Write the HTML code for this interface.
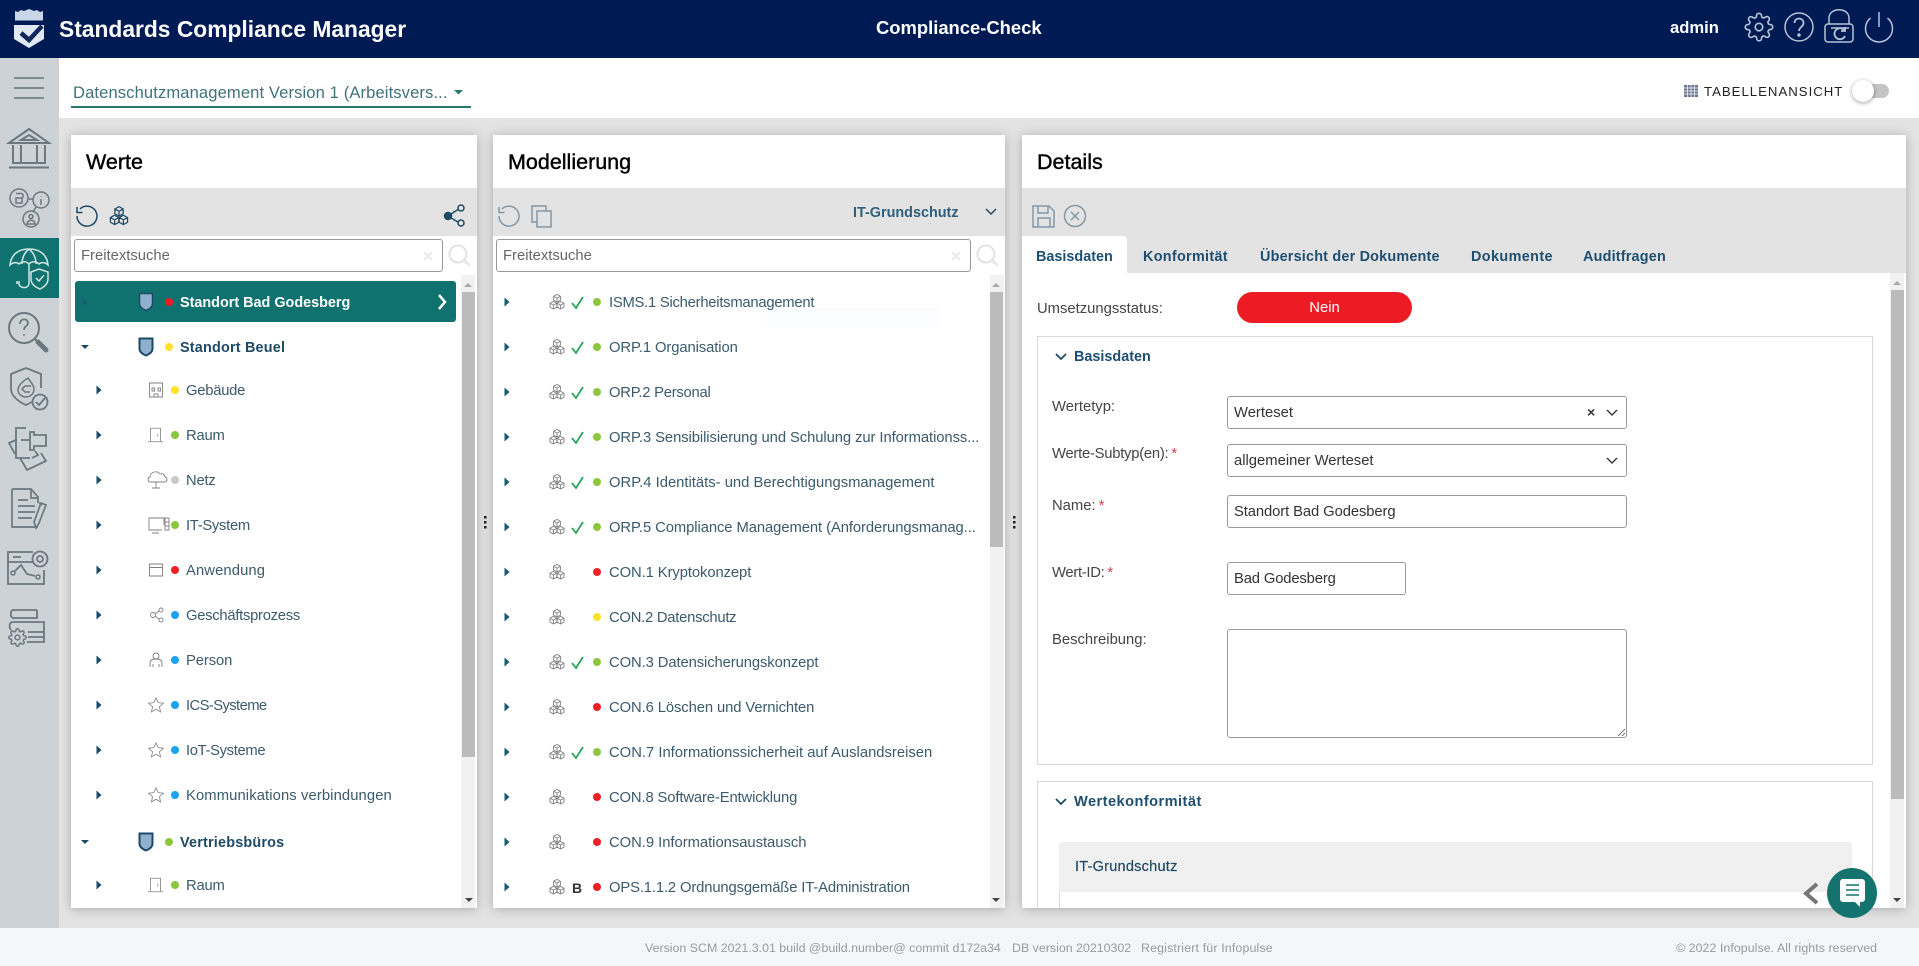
<!DOCTYPE html>
<html lang="de"><head><meta charset="utf-8"><title>Standards Compliance Manager</title>
<style>
html,body{margin:0;padding:0;width:1919px;height:966px;overflow:hidden;background:#e3e3e3;font-family:"Liberation Sans",sans-serif}
.b{position:absolute}
.t{position:absolute;line-height:20px;white-space:nowrap}
.tr{font-size:14.8px;letter-spacing:.1px;color:#3b5a6c;margin-top:1px}
.bd{font-size:14.4px;font-weight:bold;color:#1f4a66;margin-top:1px}
.tab{font-size:14.4px;font-weight:bold;color:#1f4f70;margin-top:2px}
.ttl{font-size:21.5px;color:#000;-webkit-text-stroke:.4px #000;margin-top:1px}
.lb{font-size:14.8px;color:#444;margin-top:1px}
.lb i{color:#d9414a;font-style:normal;margin-left:3px}
.in{position:absolute;box-sizing:border-box;background:#fff;border:1px solid #999;border-radius:3px;font-size:14.8px;color:#333;padding-left:6px;line-height:32px;white-space:nowrap}
.ph{color:#666;line-height:33px}
.panel{position:absolute;background:#fff;box-shadow:0 1px 10px rgba(0,0,0,.25)}
.ft{font-size:12.4px;color:#9a9a9a}
#ic{position:absolute;left:0;top:0;z-index:5}
</style></head><body>
<div class="b" style="left:0;top:0;width:1919px;height:58px;background:#001a54"></div>
<div class="b" style="left:0;top:58px;width:59px;height:870px;background:#cdd2d6"></div>
<div class="b" style="left:0;top:238px;width:59px;height:60px;background:#0f726f"></div>
<div class="b" style="left:59px;top:58px;width:1860px;height:60px;background:#fff"></div>
<div class="b" style="left:0;top:928px;width:1919px;height:38px;background:#f5f6f8"></div>

<div class="t" style="left:59px;top:18px;font-size:22.8px;line-height:22px;font-weight:bold;color:#fff">Standards Compliance Manager</div>
<div class="t" style="left:876px;top:18px;font-size:18.4px;font-weight:bold;color:#fff">Compliance-Check</div>
<div class="t" style="left:1670px;top:18px;font-size:16.6px;font-weight:bold;color:#fff">admin</div>

<div class="t" style="left:73px;top:83px;font-size:16.6px;letter-spacing:.1px;color:#41717c">Datenschutzmanagement Version 1 (Arbeitsvers...</div>
<div class="b" style="left:71px;top:106px;width:400px;height:2px;background:#27786f"></div>
<div class="t" style="left:1704px;top:82px;font-size:13.2px;letter-spacing:1px;color:#222">TABELLENANSICHT</div>
<div class="b" style="left:1855px;top:84px;width:34px;height:14px;border-radius:7px;background:#c4c4c4"></div>
<div class="b" style="left:1852px;top:80px;width:22px;height:22px;border-radius:50%;background:#fff;box-shadow:0 1px 4px rgba(0,0,0,.4)"></div>

<!-- Panel 1 -->
<div class="panel" style="left:71px;top:135px;width:406px;height:773px"></div>
<div class="b" style="left:71px;top:188px;width:406px;height:48px;background:#e3e3e3"></div>
<div class="t ttl" style="left:86px;top:151px">Werte</div>
<div class="in ph" style="left:74px;top:239px;width:369px;height:33px">Freitextsuche</div>
<div class="b" style="left:461px;top:275px;width:14px;height:633px;background:#f1f1f1"></div>
<div class="b" style="left:462px;top:292px;width:13px;height:465px;background:#bbb"></div>
<div class="b" style="left:75px;top:281px;width:381px;height:41px;border-radius:3px;background:#0f726f"></div>
<div class="t" style="left:180px;top:293px;font-size:14.4px;font-weight:bold;color:#fff">Standort Bad Godesberg</div>
<div class="t bd" style="left:180px;top:337px;letter-spacing:.2px">Standort Beuel</div>
<div class="t tr" style="left:186px;top:380px;letter-spacing:-.25px">Gebäude</div>
<div class="t tr" style="left:186px;top:425px;letter-spacing:-.2px">Raum</div>
<div class="t tr" style="left:186px;top:470px;letter-spacing:-.2px">Netz</div>
<div class="t tr" style="left:186px;top:515px;letter-spacing:-.3px">IT-System</div>
<div class="t tr" style="left:186px;top:560px">Anwendung</div>
<div class="t tr" style="left:186px;top:605px;letter-spacing:-.28px">Geschäftsprozess</div>
<div class="t tr" style="left:186px;top:650px;letter-spacing:-.1px">Person</div>
<div class="t tr" style="left:186px;top:695px;letter-spacing:-.6px">ICS-Systeme</div>
<div class="t tr" style="left:186px;top:740px;letter-spacing:-.35px">IoT-Systeme</div>
<div class="t tr" style="left:186px;top:785px">Kommunikations verbindungen</div>
<div class="t bd" style="left:180px;top:832px;letter-spacing:.2px">Vertriebsbüros</div>
<div class="t tr" style="left:186px;top:875px;letter-spacing:-.2px">Raum</div>

<!-- Panel 2 -->
<div class="panel" style="left:493px;top:135px;width:512px;height:773px"></div>
<div class="b" style="left:493px;top:188px;width:512px;height:48px;background:#e3e3e3"></div>
<div class="t ttl" style="left:508px;top:151px">Modellierung</div>
<div class="t" style="left:853px;top:203px;font-size:14.4px;font-weight:bold;color:#2f5f7c">IT-Grundschutz</div>
<div class="in ph" style="left:496px;top:239px;width:475px;height:33px">Freitextsuche</div>
<div class="b" style="left:767px;top:308px;width:171px;height:20px;background:#fafcff"></div>
<div class="b" style="left:990px;top:275px;width:14px;height:633px;background:#f1f1f1"></div>
<div class="b" style="left:990px;top:292px;width:13px;height:255px;background:#bbb"></div>
<div class="t tr" style="left:609px;top:292px;letter-spacing:-.25px">ISMS.1 Sicherheitsmanagement</div>
<div class="t tr" style="left:609px;top:337px;letter-spacing:-.1px">ORP.1 Organisation</div>
<div class="t tr" style="left:609px;top:382px;letter-spacing:-.25px">ORP.2 Personal</div>
<div class="t tr" style="left:609px;top:427px;letter-spacing:-.08px">ORP.3 Sensibilisierung und Schulung zur Informationss...</div>
<div class="t tr" style="left:609px;top:472px;letter-spacing:0">ORP.4 Identitäts- und Berechtigungsmanagement</div>
<div class="t tr" style="left:609px;top:517px;letter-spacing:-.08px">ORP.5 Compliance Management (Anforderungsmanag...</div>
<div class="t tr" style="left:609px;top:562px;letter-spacing:-.09px">CON.1 Kryptokonzept</div>
<div class="t tr" style="left:609px;top:607px;letter-spacing:-.25px">CON.2 Datenschutz</div>
<div class="t tr" style="left:609px;top:652px;letter-spacing:-.1px">CON.3 Datensicherungskonzept</div>
<div class="t tr" style="left:609px;top:697px;letter-spacing:-.1px">CON.6 Löschen und Vernichten</div>
<div class="t tr" style="left:609px;top:742px;letter-spacing:0">CON.7 Informationssicherheit auf Auslandsreisen</div>
<div class="t tr" style="left:609px;top:787px;letter-spacing:-.13px">CON.8 Software-Entwicklung</div>
<div class="t tr" style="left:609px;top:832px;letter-spacing:-.03px">CON.9 Informationsaustausch</div>
<div class="t tr" style="left:609px;top:877px;letter-spacing:-.14px">OPS.1.1.2 Ordnungsgemäße IT-Administration</div>
<div class="t" style="left:572px;top:878px;font-size:14px;font-weight:bold;color:#333">B</div>

<!-- Panel 3 -->
<div class="panel" style="left:1022px;top:135px;width:884px;height:773px"></div>
<div class="b" style="left:1022px;top:188px;width:884px;height:85px;background:#e3e3e3"></div>
<div class="b" style="left:1022px;top:236px;width:105px;height:37px;background:#fff;border-top-right-radius:4px"></div>
<div class="t ttl" style="left:1037px;top:151px">Details</div>
<div class="t tab" style="left:1036px;top:245px">Basisdaten</div>
<div class="t tab" style="left:1143px;top:245px;letter-spacing:.3px">Konformität</div>
<div class="t tab" style="left:1260px;top:245px;letter-spacing:.2px">Übersicht der Dokumente</div>
<div class="t tab" style="left:1471px;top:245px;letter-spacing:.4px">Dokumente</div>
<div class="t tab" style="left:1583px;top:245px;letter-spacing:.2px">Auditfragen</div>
<div class="b" style="left:1890px;top:273px;width:14px;height:635px;background:#f1f1f1"></div>
<div class="b" style="left:1891px;top:290px;width:13px;height:509px;background:#bbb"></div>
<div class="t lb" style="left:1037px;top:298px">Umsetzungsstatus:</div>
<div class="b" style="left:1237px;top:292px;width:175px;height:31px;border-radius:16px;background:#ed1c24;color:#fff;text-align:center;font-size:14.8px;line-height:32px">Nein</div>

<div class="b" style="left:1037px;top:336px;width:836px;height:429px;border:1px solid #d9d9d9;box-sizing:border-box"></div>
<div class="t tab" style="left:1074px;top:345px">Basisdaten</div>
<div class="t lb" style="left:1052px;top:396px">Wertetyp:</div>
<div class="t lb" style="left:1052px;top:443px;letter-spacing:-.25px">Werte-Subtyp(en):<i>*</i></div>
<div class="t lb" style="left:1052px;top:495px">Name:<i>*</i></div>
<div class="t lb" style="left:1052px;top:562px;letter-spacing:-.3px">Wert-ID:<i>*</i></div>
<div class="t lb" style="left:1052px;top:629px">Beschreibung:</div>
<div class="in" style="left:1227px;top:396px;width:400px;height:33px">Werteset</div>
<div class="in" style="left:1227px;top:444px;width:400px;height:33px">allgemeiner Werteset</div>
<div class="in" style="left:1227px;top:495px;width:400px;height:33px;letter-spacing:-.1px">Standort Bad Godesberg</div>
<div class="in" style="left:1227px;top:562px;width:179px;height:33px;letter-spacing:-.15px">Bad Godesberg</div>
<div class="in" style="left:1227px;top:629px;width:400px;height:109px"></div>
<div class="t" style="left:1587px;top:402px;font-size:14px;font-weight:bold;color:#333">×</div>

<div class="b" style="left:1037px;top:781px;width:836px;height:127px;border:1px solid #d9d9d9;border-bottom:0;box-sizing:border-box"></div>
<div class="t tab" style="left:1074px;top:790px;font-size:14.6px;letter-spacing:.45px">Wertekonformität</div>
<div class="b" style="left:1059px;top:842px;width:793px;height:50px;background:#f1f0f0;border-radius:3px 3px 0 0"></div>
<div class="b" style="left:1059px;top:892px;width:1px;height:16px;background:#d9d9d9"></div>
<div class="t" style="left:1075px;top:857px;font-size:14.6px;letter-spacing:.2px;color:#1f4a66;-webkit-text-stroke:.2px #1f4a66">IT-Grundschutz</div>

<!-- Footer -->
<div class="t ft" style="left:645px;top:938px">Version SCM 2021.3.01 build @build.number@ commit d172a34</div>
<div class="t ft" style="left:1012px;top:938px">DB version 20210302</div>
<div class="t ft" style="left:1141px;top:938px;letter-spacing:.15px">Registriert für Infopulse</div>
<div class="t ft" style="left:1676px;top:938px;letter-spacing:.05px">© 2022 Infopulse. All rights reserved</div>

<!-- Chat -->
<div class="b" style="left:1827px;top:868px;width:50px;height:50px;border-radius:50%;background:#14736f;z-index:4"></div>

<svg id="ic" width="1919" height="966" viewBox="0 0 1919 966" xmlns="http://www.w3.org/2000/svg" fill="none">
<defs>
<symbol id="gear" viewBox="0 0 24 24"><circle cx="12" cy="12" r="3"/><path d="M19.4 15a1.65 1.65 0 0 0 .33 1.82l.06.06a2 2 0 0 1 0 2.83 2 2 0 0 1-2.83 0l-.06-.06a1.65 1.65 0 0 0-1.82-.33 1.65 1.65 0 0 0-1 1.51V21a2 2 0 0 1-2 2 2 2 0 0 1-2-2v-.09A1.65 1.65 0 0 0 9 19.4a1.65 1.65 0 0 0-1.82.33l-.06.06a2 2 0 0 1-2.83 0 2 2 0 0 1 0-2.83l.06-.06a1.65 1.65 0 0 0 .33-1.82 1.65 1.65 0 0 0-1.51-1H3a2 2 0 0 1-2-2 2 2 0 0 1 2-2h.09A1.65 1.65 0 0 0 4.6 9a1.65 1.65 0 0 0-.33-1.82l-.06-.06a2 2 0 0 1 0-2.83 2 2 0 0 1 2.83 0l.06.06a1.65 1.65 0 0 0 1.82.33H9a1.65 1.65 0 0 0 1-1.51V3a2 2 0 0 1 2-2 2 2 0 0 1 2 2v.09a1.65 1.65 0 0 0 1 1.51 1.65 1.65 0 0 0 1.82-.33l.06-.06a2 2 0 0 1 2.83 0 2 2 0 0 1 0 2.83l-.06.06a1.65 1.65 0 0 0-.33 1.82V9a1.65 1.65 0 0 0 1.51 1H21a2 2 0 0 1 2 2 2 2 0 0 1-2 2h-.09a1.65 1.65 0 0 0-1.51 1z"/></symbol>
<symbol id="cubes" viewBox="0 0 20 20"><path d="M10 1.5l3.8 2.1v4.3L10 10 6.2 7.9V3.600zM6.200 3.600L10 5.700l3.800-2.100M10 5.700V10M6 9.300l3.800 2.100v4.300L6 17.800l-3.800-2.100v-4.300zM2.200 11.400L6 13.500l3.800-2.100M6 13.500v4.300M14 9.300l3.800 2.100v4.300L14 17.800l-3.800-2.100v-4.300zM10.200 11.400L14 13.500l3.800-2.100M14 13.500v4.300"/></symbol>
<symbol id="star" viewBox="0 0 20 20"><path d="M10 2l2.400 5.400 5.800.600-4.400 3.900 1.300 5.800-5.100-3-5.100 3 1.300-5.800L1.800 8l5.800-.6z"/></symbol>
<symbol id="door" viewBox="0 0 20 20"><path d="M4 17V2.500h11V17M1 17.500h17M12 9v2.500"/></symbol>
<symbol id="shield" viewBox="0 0 20 20"><path d="M3.500 1.500h13v10c0 3.500-3.500 5.800-6.500 7-3-1.200-6.500-3.500-6.500-7z"/></symbol>
<symbol id="rarr" viewBox="0 0 12 12"><path d="M3.500 1.500l5 4.500-5 4.500z"/></symbol>
<symbol id="darr" viewBox="0 0 10 10"><path d="M1 3h8L5 7z"/></symbol>
</defs>

<!-- logo -->
<path d="M14 25 L44 25 L44 39 L29 48 L14 39Z" fill="#dfe8f3"/>
<path d="M15 20 V11 l3 1 3-2 3 1 5-2 5 2 3-1 3 2 3-1 V21 H15Z" fill="#c9d7e8"/>
<path d="M21 33l8 7 13-14" stroke="#10275e" stroke-width="4.500"/>
<path d="M14 21H44" stroke="#001a54" stroke-width="1"/>

<!-- header icons -->
<g stroke="#b6c4d6" stroke-width="1.500">
<use href="#gear" x="1744" y="12" width="30" height="30" stroke-width="1.300"/>
<circle cx="1799" cy="27" r="14"/>
<path d="M1794.500 23c0-6 9-6 9 0 0 4-4.500 4-4.500 8" stroke-width="1.800"/>
<circle cx="1799" cy="35" r="1" fill="#b6c4d6"/>
<rect x="1825" y="24" width="28" height="18" rx="3"/>
<path d="M1829 24v-6c0-11 20-11 20 0v6M1831 28h18"/>
<path d="M1844 30a5.500 5.500 0 1 0 1 6M1845 27v4h-4" stroke-width="1.800"/>
<path d="M1870.500 18a13.500 13.500 0 1 0 17 0M1879 12v15"/>
</g>

<!-- sidebar -->
<g stroke="#6b7880" stroke-width="1.500">
<path d="M14 78h30M14 88h30M14 98h30" stroke="#7c8a92" stroke-width="2"/>
<path d="M9 143L29 129 49 143ZM21 140l8-5 8 5z" stroke-width="2"/>
<path d="M13 145v17M21 145v17M37 145v17M45 145v17M12 163h34M9 167.500h40" stroke-width="2"/>
<circle cx="19" cy="198" r="9"/><circle cx="41" cy="200" r="8"/><circle cx="31" cy="219" r="8"/>
<path d="M28 199h5M36 207l-3 5M16 193.500h5a2 2 0 0 1 0 4.500h-5v5h6v-5M41 196v.500M41 199v6M27 224c0-5 8-5 8 0zM31 214.500a2 2 0 1 1-.01 0"/>
<circle cx="24" cy="328" r="15" stroke-width="2"/>
<path d="M35 339l3 3" stroke-width="2"/><path d="M38 342l8 8" stroke-width="5" stroke-linecap="round"/>
<path d="M20 324c0-6 8-6 8-1 0 3-4 3-4 7M24 334v1.500" stroke-width="1.800"/>
<path d="M26 368l-15 6v15c0 7 8 13 15 16l6-3M41 388v-14l-15-6" stroke-width="1.800"/>
<path d="M28 378c-8 5-10 9-10 12 0 4 4 7 8 7s8-3 8-8c0-3-3-7-6-11zM31 386h-6l-3 3 3 3h5" stroke-width="1.500"/>
<circle cx="40" cy="402" r="7.500" stroke-width="1.800"/><path d="M36 402l3 3 6-7" stroke-width="1.800"/>
<path d="M26 428H16v30h14M16 440l-7 3 6 11M21 440h9M30 432h4v3h12v11h-12v4h-4zM20 458l7 12 19-9-5-8M32 458l6-3-3-4" stroke-width="1.800"/>
<path d="M42 505l-3-2M12 489h19l7 8v6M12 489v38h26M31 489v9h7M18 500h10M18 506h17M18 512h17M18 518h14M41 503l5 2-7 18-3 5-2-6z" stroke-width="1.700"/>
<path d="M33 552H8v32h36v-14M8 562h25M13 557h8M15 571l6-6 6 9 8 2" stroke-width="1.800"/>
<circle cx="40" cy="559" r="7.500" stroke-width="1.800"/><circle cx="40" cy="559" r="3" stroke-width="1.700"/>
<circle cx="13" cy="573" r="2"/><circle cx="38" cy="577" r="2"/>
<path d="M37 610H13c-3 1-3 7 0 8h24v-8M12 622h32v20H27M12 622c-3 1-3 6-1 8M28 632h16M28 637h16" stroke-width="1.800"/>
<use href="#gear" x="8" y="628" width="19" height="19" stroke-width="1.900"/>
</g>
<!-- active icon umbrella -->
<g stroke="#cfe6e3" stroke-width="1.500">
<path d="M10 265c1-11 9-16 19-16s18 5 19 16c-3-3-7-3-9-1-3-3-7-3-10 0-3-3-7-3-10 0-2-2-6-2-9 1z"/>
<path d="M29 249c-5 4-7 9-7 15M29 249c5 4 7 9 7 15M29 264v19c0 6-9 6-10 1v-2h-2v2"/>
<path d="M31 272l8-3 9 3v7c0 5-4 8-8 10-5-2-9-5-9-10z"/><path d="M36 278l3 3 5-6"/>
</g>

<!-- Werte toolbar -->
<g stroke="#1f4a66" stroke-width="1.500">
<path d="M80 209A10 10 0 1 1 77 216M77 207v5.500h5.500"/>
<use href="#cubes" x="108" y="205" width="22" height="22" stroke-width="1.100"/>
<circle cx="461" cy="208" r="3"/><circle cx="461" cy="223" r="3"/>
<path d="M451 214l7-4.500M451 218l7 4"/>
<circle cx="448" cy="216" r="3.500" fill="#1f4a66"/>
</g>

<g stroke="#e2e2e2" stroke-width="2"><circle cx="458" cy="254" r="8.500"/><path d="M464.500 260.500l5 5"/></g>
<g stroke="#e2e2e2" stroke-width="2"><circle cx="986" cy="254" r="8.500"/><path d="M992.500 260.500l5 5"/></g>
<path d="M424 252l8 8M432 252l-8 8" stroke="#e5e5e5" stroke-width="1.500"/>
<path d="M952 252l8 8M960 252l-8 8" stroke="#e5e5e5" stroke-width="1.500"/>

<!-- Modellierung toolbar -->
<g stroke="#8398a6" stroke-width="1.500">
<path d="M502 209A10 10 0 1 1 499 216M499 207v5.500h5.500"/>
<path d="M537 222h-5v-16h14v5M537 211h14v16h-14z"/>
</g>
<path d="M986 209l5 5 5-5" stroke="#2a4a5e" stroke-width="1.500"/>

<!-- Details toolbar -->
<g stroke="#8398a6" stroke-width="1.500">
<path d="M1033 206h16l5 5v16h-21zM1038 206v7h10v-7M1038 227v-9h12v9"/>
<circle cx="1075" cy="216" r="10.500"/><path d="M1071 212l8 8M1079 212l-8 8"/>
</g>

<!-- scroll arrows -->
<g fill="#a9a9a9"><path d="M464 287l4-4 4 4zM992 287l4-4 4 4zM1893 285l4-4 4 4z"/></g>
<g fill="#444"><path d="M465 898h8l-4 4zM992 898h8l-4 4zM1893 898h8l-4 4z"/></g>

<!-- splitter dots -->
<g fill="#222"><rect x="484" y="516" width="2.500" height="2.500"/><rect x="484" y="521" width="2.500" height="2.500"/><rect x="484" y="526" width="2.500" height="2.500"/>
<rect x="1013" y="516" width="2.500" height="2.500"/><rect x="1013" y="521" width="2.500" height="2.500"/><rect x="1013" y="526" width="2.500" height="2.500"/></g>

<!-- top select caret / grid -->
<path d="M454 90h9l-4.500 4.500z" fill="#27786f"/>
<g fill="#6d7690"><path d="M1684 85h14v12h-14z"/></g>
<path d="M1684 88h14M1684 91h14M1684 94h14M1687.500 85v12M1691 85v12M1694.500 85v12" stroke="#fff" stroke-width=".7"/>

<!-- Werte tree -->
<use href="#rarr" x="79" y="296" width="12" height="12" fill="#1a5a72"/>
<use href="#shield" x="136" y="292" width="20" height="20" fill="#8fb0d0" stroke="#1f4a66" stroke-width="1.500"/>
<circle cx="169" cy="302" r="4" fill="#ed1c24"/>
<path d="M439 295l6 7-6 7" stroke="#fff" stroke-width="2.500"/>
<use href="#darr" x="80" y="342" width="10" height="10" fill="#1a4a66"/>
<use href="#shield" x="136" y="337" width="20" height="20" fill="#8fb0d0" stroke="#1f4a66" stroke-width="2"/>
<circle cx="169" cy="347" r="4" fill="#fde12d"/>
<use href="#darr" x="80" y="837" width="10" height="10" fill="#1a4a66"/>
<use href="#shield" x="136" y="832" width="20" height="20" fill="#8fb0d0" stroke="#1f4a66" stroke-width="2"/>
<circle cx="169" cy="842" r="4" fill="#8cc63f"/>
<g fill="#1a4a66">
<use href="#rarr" x="93" y="384" width="12" height="12"/><use href="#rarr" x="93" y="429" width="12" height="12"/><use href="#rarr" x="93" y="474" width="12" height="12"/><use href="#rarr" x="93" y="519" width="12" height="12"/><use href="#rarr" x="93" y="564" width="12" height="12"/><use href="#rarr" x="93" y="609" width="12" height="12"/><use href="#rarr" x="93" y="654" width="12" height="12"/><use href="#rarr" x="93" y="699" width="12" height="12"/><use href="#rarr" x="93" y="744" width="12" height="12"/><use href="#rarr" x="93" y="789" width="12" height="12"/><use href="#rarr" x="93" y="879" width="12" height="12"/>
</g>
<g stroke="#808080" stroke-width=".9">
<path d="M149.500 383h13v14h-13zM149 383h14M152 388h2.500v3h-2.500zM158 388h2.500v3h-2.500zM154 397v-3h4v3"/>
<use href="#door" x="147" y="426" width="18" height="18"/>
<path d="M150 482c-3-1-2-5 0-5 0-5 7-7 10-3 3-1 5 1 5 3 2 0 3 4 0 5zM156 482v6M152 488h8"/>
<path d="M164 525v-7h-15v12h13M152 533h7M165 518h4v12h-4zM165 522h4M165 526h4"/>
<path d="M149.500 564h13v12h-13zM149.500 567.500h13M152 565.700h.01M155 565.700h.01M158 565.700h.01"/>
<circle cx="153" cy="615" r="2.500"/><circle cx="161" cy="610" r="2"/><circle cx="161" cy="620" r="2"/><path d="M155 614l4-3M155 616l4 3"/>
<circle cx="156" cy="656" r="3"/><path d="M150 667v-4c0-3 3-4 6-4s6 1 6 4v4M153 667v-3M159 667v-3"/>
<use href="#star" x="147" y="696" width="18" height="18"/><use href="#star" x="147" y="741" width="18" height="18"/><use href="#star" x="147" y="786" width="18" height="18"/>
<use href="#door" x="147" y="876" width="18" height="18"/>
</g>
<circle cx="175" cy="390" r="4" fill="#fde12d"/><circle cx="175" cy="435" r="4" fill="#8cc63f"/><circle cx="175" cy="480" r="4" fill="#c8c8c8"/><circle cx="175" cy="525" r="4" fill="#8cc63f"/><circle cx="175" cy="570" r="4" fill="#ed2024"/><circle cx="175" cy="615" r="4" fill="#1aa3f0"/><circle cx="175" cy="660" r="4" fill="#1aa3f0"/><circle cx="175" cy="705" r="4" fill="#1aa3f0"/><circle cx="175" cy="750" r="4" fill="#1aa3f0"/><circle cx="175" cy="795" r="4" fill="#1aa3f0"/><circle cx="175" cy="885" r="4" fill="#8cc63f"/>

<!-- Modellierung tree -->
<g fill="#1a5a72">
<use href="#rarr" x="501" y="296" width="12" height="12"/><use href="#rarr" x="501" y="341" width="12" height="12"/><use href="#rarr" x="501" y="386" width="12" height="12"/><use href="#rarr" x="501" y="431" width="12" height="12"/><use href="#rarr" x="501" y="476" width="12" height="12"/><use href="#rarr" x="501" y="521" width="12" height="12"/><use href="#rarr" x="501" y="566" width="12" height="12"/><use href="#rarr" x="501" y="611" width="12" height="12"/><use href="#rarr" x="501" y="656" width="12" height="12"/><use href="#rarr" x="501" y="701" width="12" height="12"/><use href="#rarr" x="501" y="746" width="12" height="12"/><use href="#rarr" x="501" y="791" width="12" height="12"/><use href="#rarr" x="501" y="836" width="12" height="12"/><use href="#rarr" x="501" y="881" width="12" height="12"/>
</g>
<g stroke="#808080" stroke-width="1">
<use href="#cubes" x="548" y="293" width="18" height="18"/><use href="#cubes" x="548" y="338" width="18" height="18"/><use href="#cubes" x="548" y="383" width="18" height="18"/><use href="#cubes" x="548" y="428" width="18" height="18"/><use href="#cubes" x="548" y="473" width="18" height="18"/><use href="#cubes" x="548" y="518" width="18" height="18"/><use href="#cubes" x="548" y="563" width="18" height="18"/><use href="#cubes" x="548" y="608" width="18" height="18"/><use href="#cubes" x="548" y="653" width="18" height="18"/><use href="#cubes" x="548" y="698" width="18" height="18"/><use href="#cubes" x="548" y="743" width="18" height="18"/><use href="#cubes" x="548" y="788" width="18" height="18"/><use href="#cubes" x="548" y="833" width="18" height="18"/><use href="#cubes" x="548" y="878" width="18" height="18"/>
</g>
<g stroke="#27a35a" stroke-width="1.800">
<path d="M572 303l4 5 7-11M572 348l4 5 7-11M572 393l4 5 7-11M572 438l4 5 7-11M572 483l4 5 7-11M572 528l4 5 7-11M572 663l4 5 7-11M572 753l4 5 7-11"/>
</g>
<circle cx="597" cy="302" r="4" fill="#8cc63f"/><circle cx="597" cy="347" r="4" fill="#8cc63f"/><circle cx="597" cy="392" r="4" fill="#8cc63f"/><circle cx="597" cy="437" r="4" fill="#8cc63f"/><circle cx="597" cy="482" r="4" fill="#8cc63f"/><circle cx="597" cy="527" r="4" fill="#8cc63f"/><circle cx="597" cy="572" r="4" fill="#ed2024"/><circle cx="597" cy="617" r="4" fill="#fde12d"/><circle cx="597" cy="662" r="4" fill="#8cc63f"/><circle cx="597" cy="707" r="4" fill="#ed2024"/><circle cx="597" cy="752" r="4" fill="#8cc63f"/><circle cx="597" cy="797" r="4" fill="#ed2024"/><circle cx="597" cy="842" r="4" fill="#ed2024"/><circle cx="597" cy="887" r="4" fill="#ed2024"/>

<!-- form details -->
<g stroke="#1f4a66" stroke-width="1.800"><path d="M1056 354l5 5 5-5M1056 799l5 5 5-5"/></g>
<g stroke="#333" stroke-width="1.400"><path d="M1607 410l5 5 5-5M1607 458l5 5 5-5"/></g>
<path d="M1618 736l7-7M1622 736l3-3" stroke="#777" stroke-width="1"/>

<!-- chat -->
<path d="M1840 882a3 3 0 0 1 3-3h19a3 3 0 0 1 3 3v17a3 3 0 0 1-3 3h-2v5l-5-5h-12a3 3 0 0 1-3-3z" fill="#fff"/>
<path d="M1846 885h13M1846 890h13M1846 895h13" stroke="#14736f" stroke-width="1.500"/>
<path d="M1817 884l-11 9.500 11 9.500" stroke="#777" stroke-width="4"/>
</svg>
</body></html>
